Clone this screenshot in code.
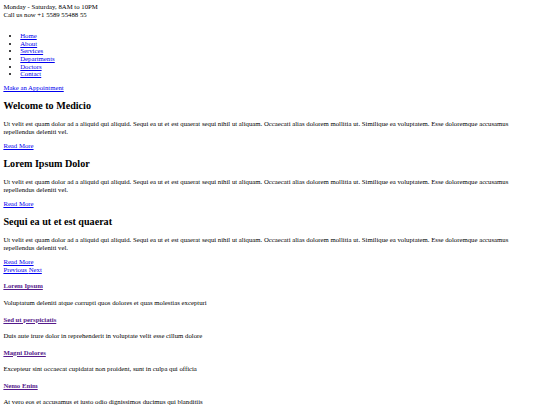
import React from 'react';

const navLinks = ['Home', 'About', 'Services', 'Departments', 'Doctors', 'Contact'];

const lorem =
  'Ut velit est quam dolor ad a aliquid qui aliquid. Sequi ea ut et est quaerat sequi nihil ut aliquam. Occaecati alias dolorem mollitia ut. Similique ea voluptatem. Esse doloremque accusamus repellendus deleniti vel.';

const slides = [
  { title: 'Welcome to Medicio', text: lorem },
  { title: 'Lorem Ipsum Dolor', text: lorem },
  { title: 'Sequi ea ut et est quaerat', text: lorem },
];

const features = [
  { title: 'Lorem Ipsum', text: 'Voluptatum deleniti atque corrupti quos dolores et quas molestias excepturi' },
  { title: 'Sed ut perspiciatis', text: 'Duis aute irure dolor in reprehenderit in voluptate velit esse cillum dolore' },
  { title: 'Magni Dolores', text: 'Excepteur sint occaecat cupidatat non proident, sunt in culpa qui officia' },
  { title: 'Nemo Enim', text: 'At vero eos et accusamus et iusto odio dignissimos ducimus qui blanditiis' },
];

const link = 'text-[#0000EE] underline decoration-[length:0.5px] underline-offset-[0.8px]';
const visited = 'text-[#551A8B] underline decoration-[length:0.5px] underline-offset-[0.8px]';

export default function App() {
  return (
    <div className="m-[3.375px] font-['Liberation_Serif',serif] text-[6.75px] leading-[7.6px] text-black">
      {/* topbar */}
      <div>Monday - Saturday, 8AM to 10PM</div>
      <div>Call us now +1 5589 55488 55</div>

      {/* nav */}
      <ul className="mt-[13.6px] mb-[6.75px] list-disc pl-[16.875px]">
        {navLinks.map((item) => (
          <li key={item}>
            <a href="#" className={link}>
              {item}
            </a>
          </li>
        ))}
      </ul>
      <div>
        <a href="#" className={link}>
          Make an Appointment
        </a>
      </div>

      {/* hero slides */}
      {slides.map((slide) => (
        <div key={slide.title}>
          <h2 className="my-[8.4px] text-[10.125px] leading-[11.64px] font-bold">{slide.title}</h2>
          <p className="my-[6.75px]">{slide.text}</p>
          <div>
            <a href="#" className={link}>
              Read More
            </a>
          </div>
        </div>
      ))}
      <div>
        <a href="#" className={link}>
          Previous{' '}
        </a>
        <a href="#" className={link}>
          Next
        </a>
      </div>

      {/* featured services */}
      {features.map((f) => (
        <div key={f.title}>
          <h4 className="my-[8.98px] font-bold">
            <a href="#" className={visited}>
              {f.title}
            </a>
          </h4>
          <p className="my-[6.75px]">{f.text}</p>
        </div>
      ))}
    </div>
  );
}
